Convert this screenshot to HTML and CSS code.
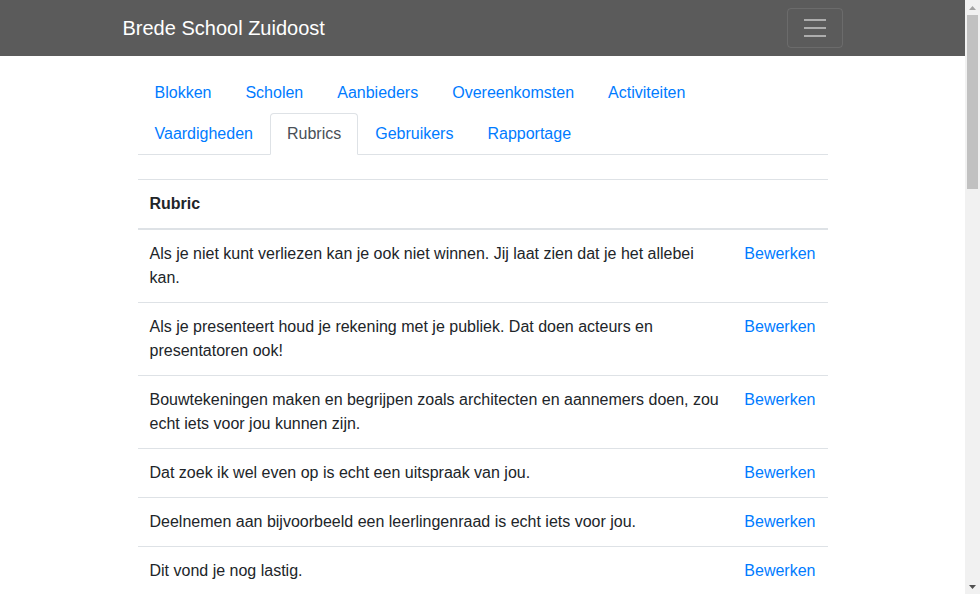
FILE: index.html
```html
<!DOCTYPE html>
<html lang="nl">
<head>
<meta charset="utf-8">
<title>Rubrics - Brede School Zuidoost</title>
<link rel="stylesheet" href="styles.css">
</head>
<body>
<div class="viewport">
  <nav class="navbar">
    <div class="container navbar-inner">
      <a class="brand" href="#">Brede School Zuidoost</a>
      <button class="toggler" type="button" aria-label="Menu">
        <svg width="30" height="30" viewBox="0 0 30 30"><path stroke="rgba(255,255,255,0.5)" stroke-width="2" d="M4 7h22M4 15h22M4 23h22"/></svg>
      </button>
    </div>
  </nav>
  <main class="container">
    <ul class="tabs">
      <li><a class="tab" href="#">Blokken</a></li>
      <li><a class="tab" href="#">Scholen</a></li>
      <li><a class="tab" href="#">Aanbieders</a></li>
      <li><a class="tab" href="#">Overeenkomsten</a></li>
      <li><a class="tab" href="#">Activiteiten</a></li>
      <li><a class="tab" href="#">Vaardigheden</a></li>
      <li><a class="tab active" href="#">Rubrics</a></li>
      <li><a class="tab" href="#">Gebruikers</a></li>
      <li><a class="tab" href="#">Rapportage</a></li>
    </ul>
    <table class="table">
      <thead>
        <tr><th>Rubric</th><th></th></tr>
      </thead>
      <tbody>
        <tr><td>Als je niet kunt verliezen kan je ook niet winnen. Jij laat zien dat je het allebei kan.</td><td><a href="#">Bewerken</a></td></tr>
        <tr><td>Als je presenteert houd je rekening met je publiek. Dat doen acteurs en presentatoren ook!</td><td><a href="#">Bewerken</a></td></tr>
        <tr><td>Bouwtekeningen maken en begrijpen zoals architecten en aannemers doen, zou echt iets voor jou kunnen zijn.</td><td><a href="#">Bewerken</a></td></tr>
        <tr><td>Dat zoek ik wel even op is echt een uitspraak van jou.</td><td><a href="#">Bewerken</a></td></tr>
        <tr><td>Deelnemen aan bijvoorbeeld een leerlingenraad is echt iets voor jou.</td><td><a href="#">Bewerken</a></td></tr>
        <tr><td>Dit vond je nog lastig.</td><td><a href="#">Bewerken</a></td></tr>
      </tbody>
    </table>
  </main>
</div>
<div class="scrollbar" aria-hidden="true">
  <div class="sb-btn">
    <svg width="7" height="4" viewBox="0 0 7 4"><path d="M0 4L3.5 0L7 4Z" fill="#a3a3a3"/></svg>
  </div>
  <div class="sb-track"><div class="sb-thumb"></div></div>
  <div class="sb-btn">
    <svg width="7" height="4" viewBox="0 0 7 4"><path d="M0 0L7 0L3.5 4Z" fill="#505050"/></svg>
  </div>
</div>
</body>
</html>
```

FILE: styles.css
```css
* { box-sizing: border-box; }
html, body { margin: 0; padding: 0; height: 100%; }
body {
  font-family: "Liberation Sans", Arial, sans-serif;
  font-size: 16px;
  line-height: 1.5;
  color: #212529;
  background: #fff;
  display: flex;
  overflow: hidden;
}
a { color: #007bff; text-decoration: none; }

.viewport {
  flex: 1;
  min-width: 0;
  height: 100vh;
  overflow: hidden;
}

.scrollbar {
  width: 15px;
  flex: none;
  height: 100vh;
  background: #f1f1f1;
  display: flex;
  flex-direction: column;
}
.sb-btn {
  height: 15px;
  display: flex;
  align-items: center;
  justify-content: center;
}
.sb-track {
  flex: 1;
  padding: 0 2px;
}
.sb-thumb {
  height: 174px;
  background: #c1c1c1;
}

.container {
  width: 100%;
  max-width: 720px;
  margin: 0 auto;
  padding: 0 15px;
}

.navbar {
  background: #5b5b5b;
  padding: 8px 16px;
}
.navbar-inner {
  display: flex;
  align-items: center;
  justify-content: space-between;
  padding: 0;
}
.brand {
  color: #fff;
  font-size: 20px;
  line-height: 30px;
  padding: 5px 0;
}
.toggler {
  display: flex;
  align-items: center;
  justify-content: center;
  width: 56px;
  height: 40px;
  padding: 0;
  background: transparent;
  border: 1px solid rgba(255,255,255,0.1);
  border-radius: 4px;
}

.tabs {
  list-style: none;
  margin: 16px 0 0;
  padding: 0;
  display: flex;
  flex-wrap: wrap;
  border-bottom: 1px solid #dee2e6;
}
.tabs li { margin-bottom: -1px; }
.tab {
  display: block;
  padding: 8px 16px;
  border: 1px solid transparent;
  border-top-left-radius: 4px;
  border-top-right-radius: 4px;
}
.tab.active {
  color: #495057;
  background: #fff;
  border-color: #dee2e6 #dee2e6 #fff;
}

.table {
  width: 100%;
  margin-top: 24px;
  border-collapse: collapse;
}
.table th, .table td {
  padding: 12px;
  vertical-align: top;
  border-top: 1px solid #dee2e6;
  text-align: left;
}
.table thead th {
  border-bottom: 2px solid #dee2e6;
  font-weight: bold;
}
.table td:last-child { white-space: nowrap; }
```
